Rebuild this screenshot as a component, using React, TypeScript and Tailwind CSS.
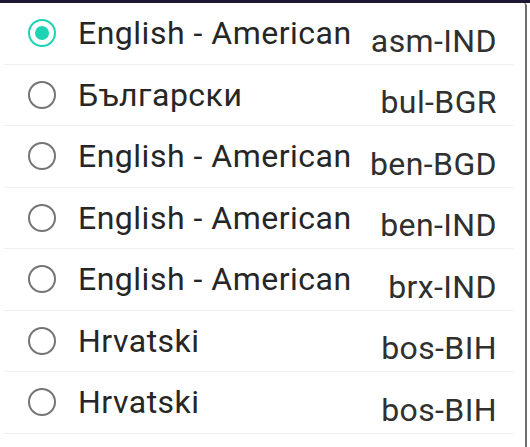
import { useState } from 'react'

const LANGS = [
  { name: 'English - American', code: 'asm-IND' },
  { name: 'Български', code: 'bul-BGR' },
  { name: 'English - American', code: 'ben-BGD' },
  { name: 'English - American', code: 'ben-IND' },
  { name: 'English - American', code: 'brx-IND' },
  { name: 'Hrvatski', code: 'bos-BIH' },
  { name: 'Hrvatski', code: 'bos-BIH' },
]

function Radio({ checked }: { checked: boolean }) {
  return (
    <span
      className={`grid place-items-center w-[28px] h-[28px] rounded-full border-[2.5px] shrink-0 ${
        checked ? 'border-[#1dd3b4]' : 'border-[#757575]'
      }`}
    >
      {checked && <span className="block w-[14px] h-[14px] rounded-full bg-[#1dd3b4]" />}
    </span>
  )
}

export default function App() {
  const [selected, setSelected] = useState(0)

  return (
    <div className="w-[530px] h-[447px] overflow-hidden bg-white font-['Roboto',sans-serif]">
      <div className="h-[3px] bg-[#1d1733]" />
      <div className="w-[527px] h-[444px] border-r-2 border-[#6f6f6f] rounded-tr-[3px] pl-[4px] pr-[12px]">
        {LANGS.map((l, i) => (
          <button
            key={i}
            type="button"
            onClick={() => setSelected(i)}
            className="flex items-center w-full h-[61.5px] border-b border-[#eeeeee] pl-[24px] pr-[16px] text-left"
          >
            <Radio checked={selected === i} />
            <span className="ml-[22px] text-[32px] leading-none tracking-[0.5px] text-[#262626] whitespace-nowrap">
              {l.name}
            </span>
            <span className="ml-auto pt-[15px] text-[32px] leading-none tracking-[0.4px] text-[#303030] whitespace-nowrap">
              {l.code}
            </span>
          </button>
        ))}
      </div>
    </div>
  )
}
